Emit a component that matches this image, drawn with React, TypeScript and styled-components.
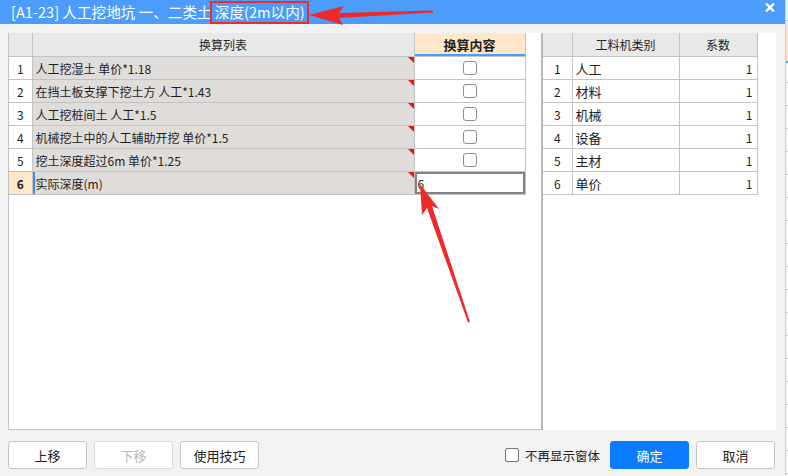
import React, { FC } from 'react'
import styled, { createGlobalStyle } from 'styled-components'

const FONT = `"Noto Sans CJK SC", "Noto Sans", sans-serif`

const LEFT_ROWS = [
  '人工挖湿土 单价*1.18',
  '在挡土板支撑下挖土方 人工*1.43',
  '人工挖桩间土 人工*1.5',
  '机械挖土中的人工辅助开挖 单价*1.5',
  '挖土深度超过6m 单价*1.25',
]

const RIGHT_ROWS = ['人工', '材料', '机械', '设备', '主材', '单价']

const GlobalStyle = createGlobalStyle`
  html, body {
    margin: 0;
    padding: 0;
    background: #e9e9e9;
    font-family: ${FONT};
  }
`

const App: FC = () => (
  <Page>
    <GlobalStyle />
    <Dialog>
      <TitleBar>
        <Title>[A1-23] 人工挖地坑 一、二类土 深度(2m以内)</Title>
        <Close>
          <svg width="10" height="9" viewBox="0 0 10 9">
            <path d="M1 0.5 L9 8.5 M9 0.5 L1 8.5" stroke="#fff" strokeWidth="2.4" />
          </svg>
        </Close>
      </TitleBar>

      <Body>
        <LeftPanel>
          <Grid>
            <colgroup>
              <col style={{ width: 23 }} />
              <col style={{ width: 382 }} />
              <col style={{ width: 111 }} />
            </colgroup>
            <thead>
              <tr>
                <HeadCell />
                <HeadCell>换算列表</HeadCell>
                <HeadCell $active>换算内容</HeadCell>
              </tr>
            </thead>
            <tbody>
              {LEFT_ROWS.map((text, i) => (
                <tr key={text}>
                  <NumCell>{i + 1}</NumCell>
                  <NameCell>
                    {text}
                    <Flag />
                  </NameCell>
                  <ValueCell>
                    <Check />
                  </ValueCell>
                </tr>
              ))}
              <tr>
                <NumCell $current>6</NumCell>
                <NameCell $current>
                  实际深度(m)
                  <Flag />
                </NameCell>
                <EditCell>6</EditCell>
              </tr>
            </tbody>
          </Grid>
        </LeftPanel>

        <Splitter />

        <RightPanel>
          <Grid>
            <colgroup>
              <col style={{ width: 29 }} />
              <col style={{ width: 107 }} />
              <col style={{ width: 78 }} />
            </colgroup>
            <thead>
              <tr>
                <HeadCell />
                <HeadCell>工料机类别</HeadCell>
                <HeadCell>系数</HeadCell>
              </tr>
            </thead>
            <tbody>
              {RIGHT_ROWS.map((name, i) => (
                <tr key={name}>
                  <NumCell>{i + 1}</NumCell>
                  <TypeCell>{name}</TypeCell>
                  <RatioCell>1</RatioCell>
                </tr>
              ))}
            </tbody>
          </Grid>
        </RightPanel>
      </Body>

      <Footer>
        <ButtonGroup>
          <Button>上移</Button>
          <Button disabled>下移</Button>
          <Button>使用技巧</Button>
        </ButtonGroup>
        <ButtonGroup>
          <CheckLabel>
            <Check $small />
            不再显示窗体
          </CheckLabel>
          <Button $primary>确定</Button>
          <Button>取消</Button>
        </ButtonGroup>
      </Footer>

      <Annotations width="785" height="476" viewBox="0 0 785 476">
        <rect x="211" y="2" width="97" height="21" fill="none" stroke="#ee2a2a" strokeWidth="2" />
        <polygon
          points="309,15 344,6 339,13 433,10.5 433,12.5 339,18 343,25"
          fill="#f0282a"
        />
        <polygon
          points="420,184 439,209 432,206 470,322 468,322.5 427,208 422,215"
          fill="#f0282a"
        />
      </Annotations>
    </Dialog>
    <Backdrop>
      <BackdropHead />
    </Backdrop>
  </Page>
)

const Page = styled.div`
  display: flex;
  width: 788px;
  height: 476px;
  overflow: hidden;
`

const Dialog = styled.div`
  position: relative;
  display: flex;
  flex-direction: column;
  width: 785px;
  height: 476px;
  flex: none;
  background: #f2f2f2;
`

const TitleBar = styled.div`
  display: flex;
  justify-content: space-between;
  align-items: center;
  height: 24px;
  padding: 0 10px 0 11px;
  background: #4b9cfb;
  color: #fff;
`

const Title = styled.div`
  font-size: 14.6px;
  line-height: 24px;
  white-space: nowrap;
  margin-top: -1px;
`

const Close = styled.div`
  display: flex;
  align-self: flex-start;
  margin-top: 3px;
`

const Body = styled.div`
  display: flex;
  height: 397px;
  margin-top: 9px;
  padding: 0 9px 0 8px;
`

const LeftPanel = styled.div`
  width: 533px;
  background: #fff;
  border-left: 1px solid #c3c3c3;
  border-bottom: 1px solid #c3c3c3;
  box-sizing: border-box;
`

const Splitter = styled.div`
  width: 2px;
  background: #b8b8b8;
`

const RightPanel = styled.div`
  flex: 1;
  background: #fff;
`

const Grid = styled.table`
  border-collapse: collapse;
  table-layout: fixed;
  font-size: 12px;
  color: #1e1e1e;

  td,
  th {
    border: 1px solid #c3c3c3;
    padding: 0;
    height: 22px;
    white-space: nowrap;
  }

  thead th {
    height: 23px;
  }

  tr > *:first-child {
    border-left: none;
  }
`

const HeadCell = styled.th<{ $active?: boolean }>`
  background: ${p => (p.$active ? '#ffe7c8' : '#e8e8e8')};
  font-weight: ${p => (p.$active ? 700 : 400)};
  font-size: ${p => (p.$active ? '13px' : '12px')};
  box-shadow: ${p => (p.$active ? 'inset 0 -2px 0 #4b9cfb' : 'none')};
  text-align: center;
  border-top: none !important;
`

const NumCell = styled.td<{ $current?: boolean }>`
  text-align: center;
  background: ${p => (p.$current ? '#ffe7c8' : '#fff')};
  font-weight: ${p => (p.$current ? 700 : 400)};
`

const NameCell = styled.td<{ $current?: boolean }>`
  position: relative;
  padding-left: 3px !important;
  background: #e0dcd9;
  box-shadow: ${p => (p.$current ? 'inset 2px 0 0 #3c8ef2' : 'none')};
`

const Flag = styled.span`
  position: absolute;
  top: 0;
  right: 0;
  width: 0;
  height: 0;
  border-top: 6px solid #f01010;
  border-left: 6px solid transparent;
`

const ValueCell = styled.td`
  text-align: center;
  background: #fff;
  line-height: 0;
`

const EditCell = styled.td`
  background: #fff;
  padding-left: 3px !important;
  box-shadow: inset 0 0 0 2px #828282;
`

const Check = styled.span<{ $small?: boolean }>`
  display: inline-block;
  width: 12px;
  height: 12px;
  border: 1px solid ${p => (p.$small ? '#777' : '#8d8d8d')};
  border-radius: ${p => (p.$small ? '2px' : '3px')};
  background: #fff;
  vertical-align: middle;
`

const TypeCell = styled.td`
  padding-left: 3px !important;
  font-size: 13px;
`

const RatioCell = styled.td`
  text-align: right;
  padding-right: 4px !important;
`

const Footer = styled.div`
  display: flex;
  justify-content: space-between;
  align-items: center;
  margin-top: 11px;
  padding: 0 10px 0 8px;
`

const ButtonGroup = styled.div`
  display: flex;
  align-items: center;
  gap: 7px;
`

const CheckLabel = styled.label`
  display: flex;
  align-items: center;
  gap: 6px;
  margin-right: 3px;
  font-size: 12.5px;
  color: #222;
`

const Button = styled.button<{ $primary?: boolean }>`
  width: 79px;
  height: 28px;
  box-sizing: border-box;
  border: 1px solid ${p => (p.$primary ? '#0b7bff' : '#c6c6c6')};
  border-radius: 3px;
  background: ${p => (p.$primary ? '#0b7bff' : '#fff')};
  color: ${p => (p.$primary ? '#fff' : '#222')};
  font-family: ${FONT};
  font-size: 13px;
  padding: 0;

  &:disabled {
    border-color: #dcdcdc;
    color: #b9b9b9;
  }
`

const Annotations = styled.svg`
  position: absolute;
  top: 0;
  left: 0;
  pointer-events: none;
`

const Backdrop = styled.div`
  flex: 1;
  background: repeating-linear-gradient(
    to bottom,
    #f4f4f4 0,
    #f4f4f4 22px,
    #c8c8c8 22px,
    #c8c8c8 23px
  );
  background-position: 0 37px;
  border-left: 1px solid #d0d0d0;
`

const BackdropHead = styled.div`
  height: 37px;
  margin-top: 24px;
  background: #f4dfc6;
  border-bottom: 2px solid #4b9cfb;
`

export default App
